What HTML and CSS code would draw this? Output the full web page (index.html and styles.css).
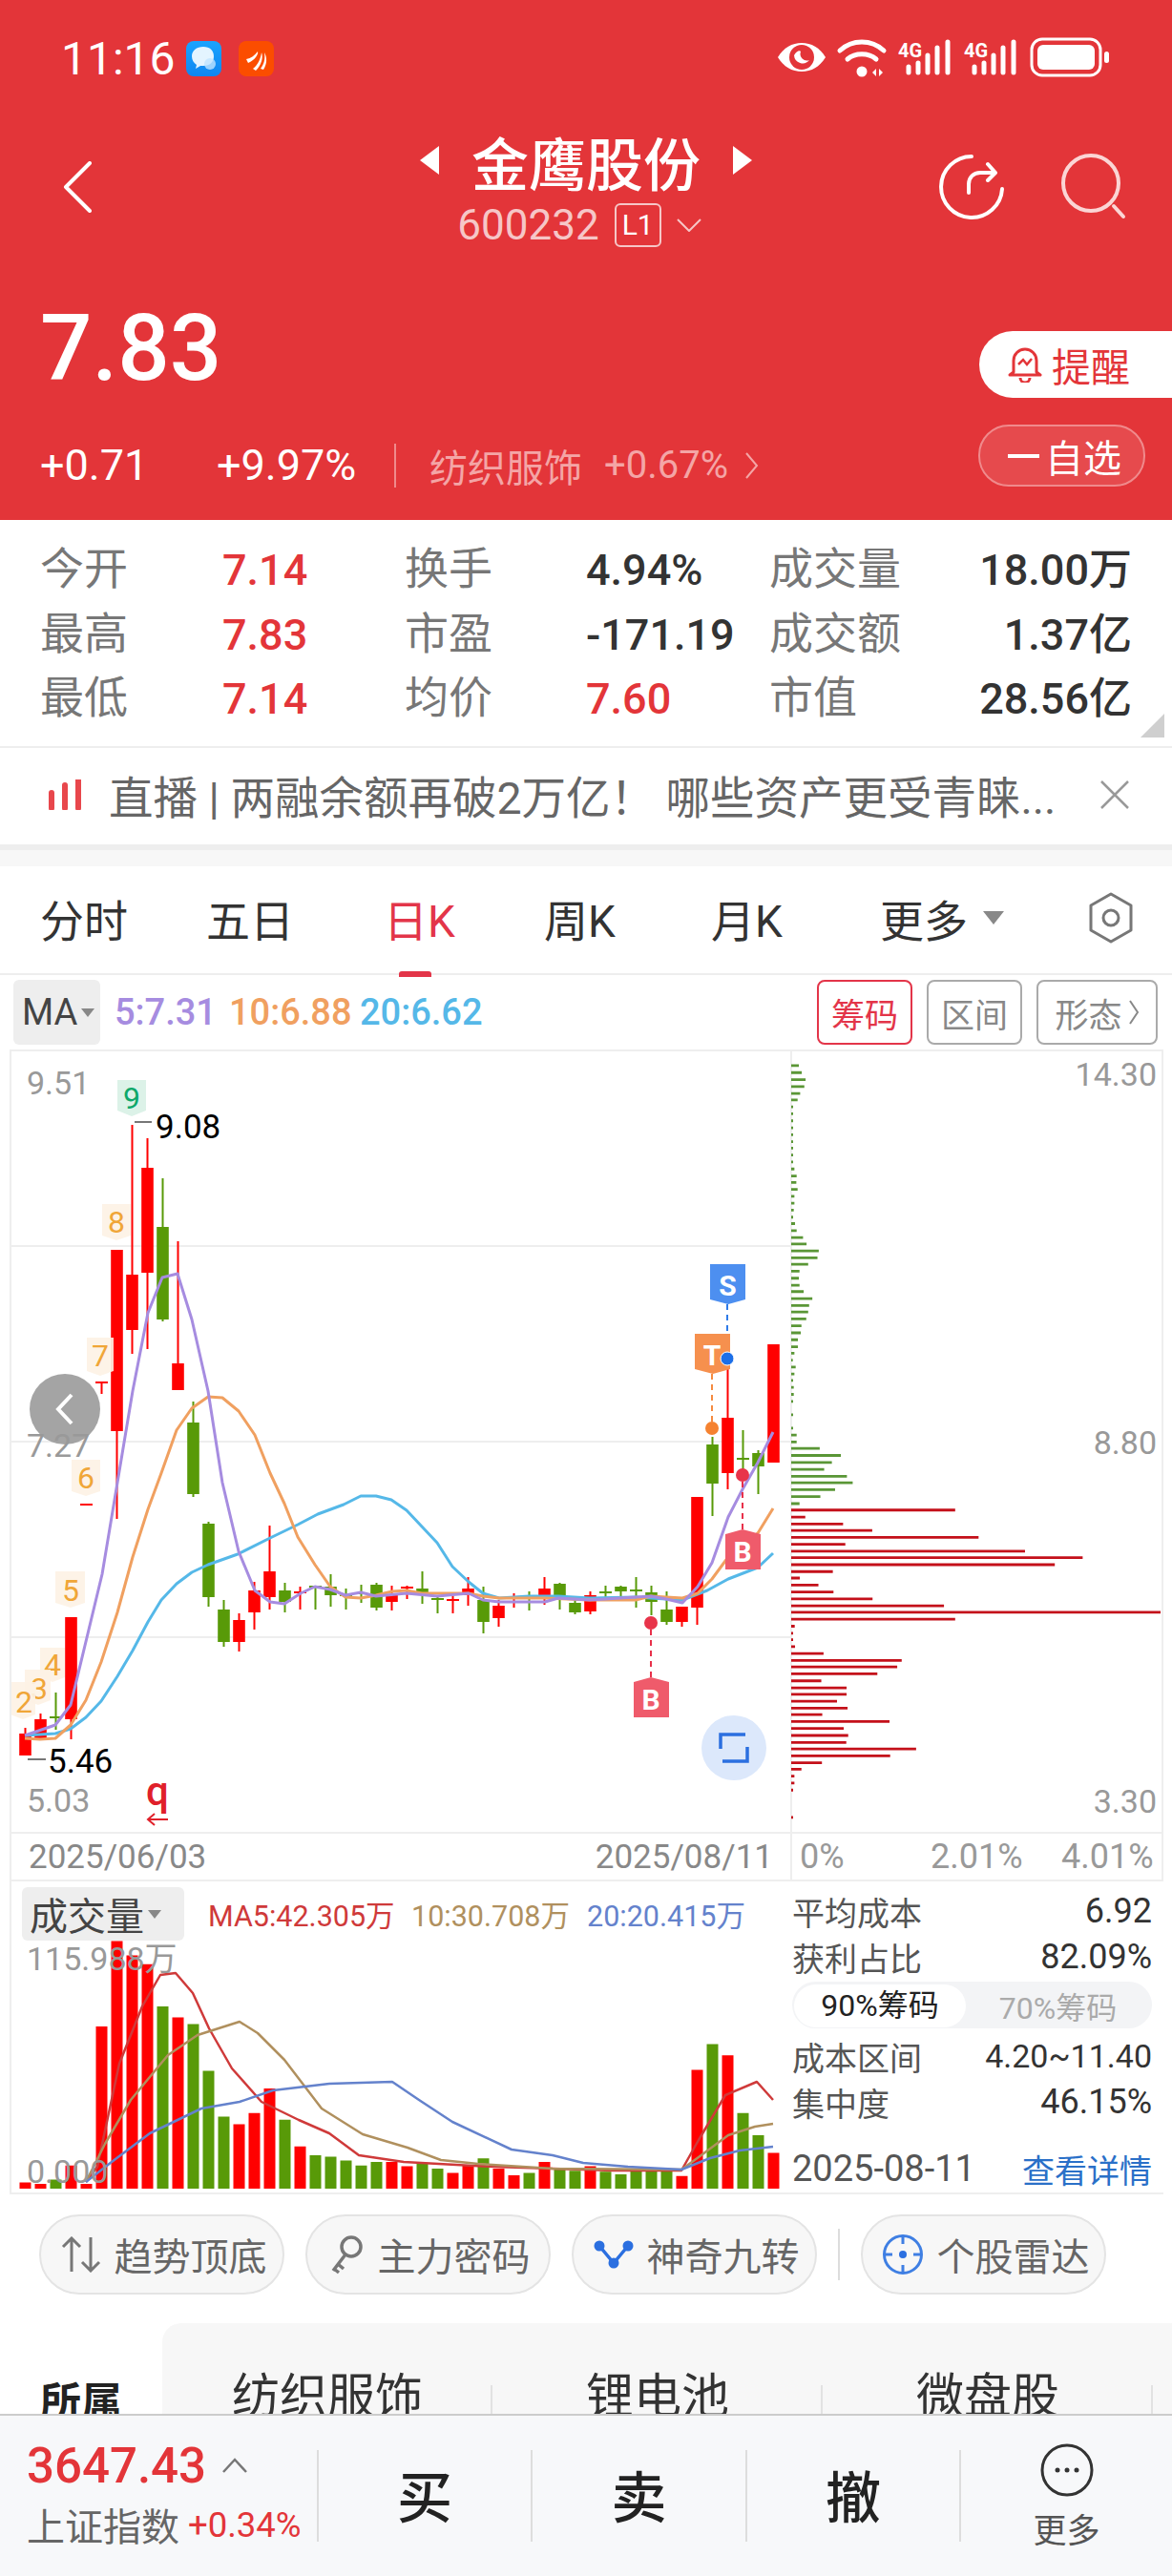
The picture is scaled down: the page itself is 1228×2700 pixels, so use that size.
FILE: index.html
```html
<!DOCTYPE html>
<html lang="zh-CN">
<head>
<meta name="viewport" content="width=device-width, initial-scale=1">
<title>金鹰股份</title>
<link rel="stylesheet" href="styles.css">
</head>
<body>

<header class="hero">
    <div class="status">
        <span class="clock">11:16</span>
        <svg class="app-icon" viewBox="0 0 37 37"><defs><linearGradient id="qq" x1="0" y1="0" x2="0" y2="1"><stop offset="0" stop-color="#1aa4ff"/><stop offset="1" stop-color="#0f86f0"/></linearGradient></defs><rect width="37" height="37" rx="8" fill="url(#qq)"/><path d="M18 6c-7 0-12 4-12 10 0 4 2 7 5 9l-1 4 5-3h3c7 0 11-4 11-10S25 6 18 6z" fill="#e4f4ff"/><circle cx="25" cy="24" r="6" fill="#bfe4ff" opacity=".8"/></svg>
        <svg class="app-icon app-icon-second" viewBox="0 0 37 37"><rect width="37" height="37" rx="8" fill="#fb4d00"/><path d="M8 19c5-1 9-4 12-8 1 3-3 9-10 12zM15 29c5-4 8-10 9-17 2 5 0 13-6 19zM23 29c4-5 5-11 4-17 3 5 3 12-1 18z" fill="#fff"/></svg>
        <span class="status-gap"></span>
        <svg class="status-icons" width="348" height="44" viewBox="815 39 348 44">
            <path d="M815 60c6-10 15-15 25-15s19 5 25 15c-6 10-15 15-25 15s-19-5-25-15z" fill="#fff"/>
            <circle cx="840" cy="60" r="13" fill="#e33539"/>
            <path d="M832 58a9 9 0 0 0 16 5 7 7 0 0 1-9-9c-1-2-5 0-7 4z" fill="#fff"/>
            <g fill="none" stroke="#fff" stroke-width="5" stroke-linecap="round">
                <path d="M880 53c13-12 33-12 46 0"/>
                <path d="M888 62c8-7 22-7 30 0"/>
            </g>
            <circle cx="903" cy="75" r="5.5" fill="#fff"/>
            <path d="M918 72v8l-4-4zM921 72v8l4-4z" fill="#fff"/>
            <text class="net" x="941" y="60">4G</text>
            <text class="net" x="1010" y="60">4G</text>
            <g fill="none" stroke="#fff" stroke-width="5" stroke-linecap="round">
                <path d="M952 70v6M962 66v10M972 58v18M982 50v26M993 44v32"/>
                <path d="M1021 70v6M1031 66v10M1041 58v18M1051 50v26M1062 44v32"/>
            </g>
            <rect x="1081" y="41" width="72" height="38" rx="11" fill="none" stroke="#fff" stroke-width="3"/>
            <rect x="1087" y="47" width="60" height="26" rx="6" fill="#fff"/>
            <rect x="1157" y="54" width="5" height="12" rx="2.5" fill="#fff"/>
        </svg>
    </div>

    <div class="titlebar">
        <svg class="back" width="30" height="54" viewBox="0 0 30 54"><path d="M28 2 3 27l25 25" fill="none" stroke="#fff" stroke-width="4" stroke-linecap="round" stroke-linejoin="round"/></svg>
        <div class="title-block">
            <div class="title-line">
                <span class="tri tri-left"></span>
                <span class="stock-name">金鹰股份</span>
                <span class="tri tri-right"></span>
            </div>
            <div class="code-line">
                <span>600232</span>
                <span class="level">L1</span>
                <svg width="26" height="14" viewBox="0 0 26 14"><path d="M1 1l12 12L25 1" fill="none" stroke="#f6c6c7" stroke-width="2"/></svg>
            </div>
        </div>
        <svg class="title-actions" width="196" height="70" viewBox="984 161 196 70">
            <g fill="none" stroke-linecap="round" stroke-linejoin="round" stroke-width="4">
                <path d="M1018 164a32 32 0 1 0 32 34" stroke="#fff"/>
                <path d="M1015 202v-9c0-7 5-12 12-12h15M1035 172l8 9-8 8" stroke="#fff"/>
                <circle cx="1143" cy="192" r="29" stroke="#fbd5d5"/>
                <path d="M1167 216l10 11" stroke="#fbd5d5"/>
            </g>
        </svg>
    </div>

    <div class="quote-head">
        <div class="price-col">
            <div class="price">7.83</div>
            <div class="change-row">
                <span class="chg-abs">+0.71</span>
                <span class="chg-pct">+9.97%</span>
                <span class="chg-div"></span>
                <span class="sector">纺织服饰</span>
                <span class="sector-pct">+0.67%</span>
                <svg width="15" height="30" viewBox="0 0 15 30"><path d="M2 2l11 13L2 28" fill="none" stroke="#f4a5a6" stroke-width="2"/></svg>
            </div>
        </div>
        <div class="btn-col">
            <div class="remind">
                <svg width="36" height="38" viewBox="0 0 36 38"><path d="M6 27V15a12 12 0 0 1 24 0v12l4 3H2zM13 33a5 5 0 0 0 10 0" fill="none" stroke="#e33539" stroke-width="3" stroke-linejoin="round"/><path d="M11 19l5-5 4 5 5-6" fill="none" stroke="#e33539" stroke-width="2.5"/></svg>
                <span>提醒</span>
            </div>
            <div class="watch"><span class="watch-dash"></span><span>自选</span></div>
        </div>
    </div>
</header>

<section class="quote">
    <span class="q-label">今开</span><span class="q-val up">7.14</span>
    <span class="q-label">换手</span><span class="q-val">4.94%</span>
    <span class="q-label">成交量</span><span class="q-val right">18.00万</span>

    <span class="q-label">最高</span><span class="q-val up">7.83</span>
    <span class="q-label">市盈</span><span class="q-val">-171.19</span>
    <span class="q-label">成交额</span><span class="q-val right">1.37亿</span>

    <span class="q-label">最低</span><span class="q-val up">7.14</span>
    <span class="q-label">均价</span><span class="q-val up">7.60</span>
    <span class="q-label">市值</span><span class="q-val right">28.56亿</span>
    <span class="corner"></span>
</section>

<section class="news">
    <svg width="36" height="32" viewBox="0 0 36 32"><path d="M4 14v16M18 6v24M32 1v29" fill="none" stroke="#e8474c" stroke-width="6" stroke-linecap="round"/></svg>
    <span class="news-text">直播 | 两融余额再破2万亿！ 哪些资产更受青睐...</span>
    <svg width="32" height="32" viewBox="0 0 32 32"><path d="M2 2l28 28M30 2 2 30" fill="none" stroke="#999" stroke-width="2.5"/></svg>
</section>
<div class="band"></div>

<nav class="tabs">
    <span>分时</span>
    <span>五日</span>
    <span class="active">日K</span>
    <span>周K</span>
    <span>月K</span>
    <span class="tab-more">更多<i class="caret"></i></span>
    <svg width="48" height="54" viewBox="0 0 48 54"><path d="M24 2l21 12v26L24 52 3 40V14z" fill="none" stroke="#777" stroke-width="3" stroke-linejoin="round"/><circle cx="24" cy="27" r="8" fill="none" stroke="#777" stroke-width="3"/></svg>
</nav>

<div class="toolbar">
    <div class="ma-btn">MA<i class="caret small"></i></div>
    <span class="ma ma5">5:7.31</span>
    <span class="ma ma10">10:6.88</span>
    <span class="ma ma20">20:6.62</span>
    <span class="tool-gap"></span>
    <span class="tool on">筹码</span>
    <span class="tool">区间</span>
    <span class="tool wide">形态
        <svg width="12" height="28" viewBox="0 0 12 28"><path d="M2 2l8 12-8 12" fill="none" stroke="#888" stroke-width="2"/></svg>
    </span>
</div>

<section class="chart-box">
    <div class="chart-top">
        <div class="kline-wrap">
            <svg class="kline" width="816" height="818" viewBox="12 1102 816 818">
                <path class="grid" d="M12 1306H828M12 1511H828M12 1716H828"/>

                <text class="axis" x="28" y="1147">9.51</text>

                <path class="wick red" d="M26.5 1811V1840M42.5 1796V1823M74.5 1695V1823M106.5 1449V1461M122.5 1310V1592M138.5 1179V1419M154.5 1193V1414M186.5 1301V1457M250.5 1691V1731M266.5 1658V1708M282.5 1599V1687M314.5 1663V1687M410.5 1662V1688M426.5 1662V1676M474.5 1673V1691M490.5 1653V1683M522.5 1677V1705M538.5 1670V1685M570.5 1653V1682M618.5 1668V1692M714.5 1684V1705M730.5 1569V1703M762.5 1435V1561"/>
                <path class="wick red" d="M84 1577H97M100 1449H113M308 1669H321M420 1664H433M468 1677H481M532 1675H545"/>
                <path class="body red" d="M26.5 1817V1840M42.5 1802V1823M74.5 1695V1802M122.5 1310V1500M138.5 1336V1394M154.5 1224V1334M186.5 1429V1457M250.5 1698V1721M266.5 1667V1690M282.5 1647V1674M410.5 1671V1679M490.5 1665V1672M522.5 1683V1696M570.5 1665V1673M618.5 1672V1689M714.5 1684V1700M730.5 1569V1685M762.5 1486V1544M810.5 1409V1533"/>

                <path class="wick green" d="M58.5 1774V1813M170.5 1235V1385M202.5 1469V1569M218.5 1595V1684M234.5 1677V1726M298.5 1659V1690M330.5 1662V1687M346.5 1650V1684M362.5 1665V1687M378.5 1661V1680M394.5 1659V1688M442.5 1647V1681M458.5 1672V1691M506.5 1663V1712M554.5 1668V1688M586.5 1659V1687M602.5 1673V1692M634.5 1662V1677M650.5 1662V1675M666.5 1653V1685M682.5 1662V1693M698.5 1668V1703M746.5 1506V1589M778.5 1499V1552M794.5 1520V1566"/>
                <path class="wick green" d="M52 1800H65M324 1663H337M356 1672H369M372 1670H385M452 1676H465M548 1675H561M628 1669H641M660 1667H673M772 1529H785"/>
                <path class="body green" d="M170.5 1286V1383M202.5 1491V1566M218.5 1597V1674M234.5 1687V1721M298.5 1667V1679M346.5 1663V1672M394.5 1661V1685M442.5 1665V1672M506.5 1677V1700M586.5 1660V1673M602.5 1680V1690M650.5 1663V1668M682.5 1669V1679M698.5 1687V1700M746.5 1514V1555M794.5 1523V1537"/>

                <polyline class="line l-blue" points="26,1819 58,1817 74,1812 90,1800 106,1783 123,1757 139,1730 155,1700 169,1677 185,1660 201,1648 218,1640 249,1629 283,1612 312,1598 333,1587 360,1577 378,1568 394,1568 410,1572 426,1583 458,1617 474,1642 491,1658 506,1670 523,1675 554,1673 585,1673 618,1675 666,1674 698,1676 715,1677 741,1667 763,1655 794,1643 810,1628"/>
                <polyline class="line l-orange" points="26,1822 42,1823 58,1822 74,1808 90,1782 106,1742 123,1690 139,1632 155,1582 169,1544 185,1499 201,1476 218,1464 233,1465 250,1479 267,1504 283,1544 298,1576 312,1611 330,1640 346,1663 362,1674 378,1675 394,1672 411,1668 426,1667 442,1670 491,1670 506,1673 523,1675 571,1675 618,1677 666,1677 682,1673 715,1675 731,1670 746,1655 763,1632 794,1607 810,1581"/>
                <polyline class="line l-purple" points="26,1819 58,1808 74,1787 107,1650 123,1554 139,1458 155,1376 170,1339 186,1335 201,1383 218,1458 233,1554 250,1626 267,1667 283,1679 298,1681 315,1670 330,1663 346,1666 362,1672 378,1669 394,1673 426,1670 458,1673 491,1670 506,1677 523,1679 571,1679 585,1675 618,1677 666,1674 682,1673 698,1676 715,1680 731,1663 746,1638 763,1590 778,1561 794,1533 810,1501"/>

                <g class="tag-nine"><path d="M123 1132h30v32l-15 6-15-6z"/><text x="138" y="1162">9</text></g>
                <g class="tag-num">
                    <path d="M107 1262h30v33l-15 5-15-5z"/><text x="122" y="1292">8</text>
                    <path d="M91 1402h28v35l-14 5-14-5z"/><text x="105" y="1432">7</text>
                    <path d="M75 1530h30v33l-15 5-15-5z"/><text x="90" y="1560">6</text>
                    <path d="M58 1647h31v33l-15 5-16-5z"/><text x="74" y="1678">5</text>
                    <path d="M42 1727h26v31l-13 5-13-5z"/><text x="55" y="1756">4</text>
                    <path d="M26 1750h27v32l-13 5-14-5z"/><text x="41" y="1781">3</text>
                    <path d="M11 1763h26v34l-13 5-13-5z"/><text x="25" y="1795">2</text>
                </g>

                <path class="dash-gray" d="M141 1176h18M29 1844h19"/>
                <text class="hi-lo" x="163" y="1193">9.08</text>
                <text class="hi-lo" x="50" y="1858">5.46</text>
                <text class="axis" x="28" y="1899">5.03</text>

                <circle class="nav-dot" cx="68" cy="1477" r="37"/>
                <path class="nav-chev" d="M75 1462l-14 15 14 15"/>
                <text class="axis" x="28" y="1527">7.27</text>

                <path class="dash d-blue" d="M762 1367V1418"/>
                <path class="dash d-orange" d="M746 1440V1490"/>
                <path class="dash d-red" d="M778 1553V1603M682 1708V1758"/>
                <g class="sig">
                    <path class="s-b" d="M744 1325h37v37l-18 5-19-5z"/><text x="762.500" y="1358">S</text>
                    <path class="s-t" d="M728 1398h37v37l-18 5-19-5z"/><text x="746" y="1431">T</text>
                    <path class="s-r" d="M760 1608l18-5 19 5v37h-37z"/><text x="778" y="1637">B</text>
                    <path class="s-r" d="M664 1763l18-5 19 5v37h-37z"/><text x="682" y="1792">B</text>
                </g>
                <circle class="dot-b" cx="762" cy="1424" r="7"/>
                <circle class="dot-o" cx="746" cy="1497" r="7"/>
                <circle class="dot-r" cx="778" cy="1546" r="7"/>
                <circle class="dot-r" cx="682" cy="1701" r="7"/>

                <ellipse class="fit-bg" cx="769" cy="1832" rx="34" ry="34"/>
                <path class="fit-ic" d="M781 1818h-26v15M757 1846h26v-15"/>

                <text class="q-mark" x="165" y="1892">q</text>
                <path class="q-arrow" d="M176 1907h-21M162 1901l-7 6 7 6"/>
            </svg>
        </div>
        <div class="chip-wrap">
            <svg class="chip" width="387" height="818" viewBox="830 1102 387 818">
                <g transform="translate(830,1090) scale(.3356,.5612)">
                    <path class="chip-g" d="M0 48h24M0 61h33M0 74h45M0 87h41M0 100h28M0 112h20M0 125h6M0 138h6M0 151h6M0 164h6M0 177h6M0 190h6M0 202h6M0 215h6M0 228h6M0 241h10M0 254h17M0 266h16M0 279h20M0 292h10M0 305h10M0 318h8M0 331h6M0 343h12M0 356h17M0 369h37M0 381h48M0 394h86M0 407h82M0 419h53M0 432h26M0 445h24M0 458h26M0 470h39M0 483h66M0 496h56M0 508h53M0 521h47M0 534h32M0 547h30M0 560h21M0 573h21M0 585h10M0 598h5M0 611h14M0 624h10M0 636h6M0 649h8M0 662h8M0 675h6M0 700h6M0 725h6M0 738h17M0 751h17M0 763h89M0 776h155M0 789h127M0 802h103M0 815h174M0 827h192M0 840h137M0 853h91M0 866h26"/>
                    <path class="chip-r" d="M0 878h512M0 891h44M0 904h162M0 916h253M0 929h585M0 942h169M0 955h730M0 967h910M0 980h823M0 993h130M0 1005h27M0 1018h85M0 1031h132M0 1044h254M0 1057h477M0 1069h1160M0 1082h512M0 1095h11M0 1108h6M0 1120h6M0 1133h12M0 1146h101M0 1159h345M0 1171h331M0 1184h269M0 1197h94M0 1210h173M0 1222h173M0 1235h143M0 1248h176M0 1260h97M0 1273h307M0 1286h164M0 1299h178M0 1312h172M0 1324h390M0 1337h309M0 1350h96M0 1362h32M0 1375h10M0 1388h10M0 1401h6M0 1452h6"/>
                </g>
                <text class="axis end" x="1213" y="1138">14.30</text>
                <text class="axis end" x="1213" y="1524">8.80</text>
                <text class="axis end" x="1213" y="1900">3.30</text>
            </svg>
        </div>
    </div>
    <div class="axis-row">
        <div class="dates"><span>2025/06/03</span><span>2025/08/11</span></div>
        <div class="pcts"><span>0%</span><span>2.01%</span><span>4.01%</span></div>
    </div>
</section>

<section class="vol-box">
    <div class="vol-chart">
        <svg width="816" height="326" viewBox="12 1974 816 326">
            <path class="vol-r" d="M26.5 2296V2289.400M42.500 2296V2291M74.500 2296V2271.700M90.500 2296V2291M106.500 2296V2126M122.500 2296V2036.600M138.500 2296V2051.500M154.500 2296V2060.800M186.500 2296V2116.600M250.500 2296V2228.400M266.500 2296V2216.700M282.500 2296V2191M314.500 2296V2251.700M410.500 2296V2268M426.500 2296V2272.600M474.500 2296V2279.600M490.500 2296V2271.700M522.500 2296V2275M538.500 2296V2282M570.500 2296V2268M618.500 2296V2272.600M714.500 2296V2282.800M730.500 2296V2171.600M762.500 2296V2156.200M810.500 2296V2258.600"/>
            <path class="vol-g" d="M58.500 2296V2286.600M170.500 2296V2105M202.500 2296V2123.600M218.500 2296V2172.500M234.500 2296V2220.500M298.500 2296V2223.700M330.500 2296V2261M346.500 2296V2262.400M362.500 2296V2266.600M378.500 2296V2271.700M394.500 2296V2268M442.500 2296V2269.300M458.500 2296V2275M506.500 2296V2264.200M554.500 2296V2279.600M586.500 2296V2275M602.500 2296V2277.300M634.500 2296V2278.200M650.500 2296V2281M666.500 2296V2275.900M682.500 2296V2275.900M698.500 2296V2275.900M746.500 2296V2144.600M778.500 2296V2216.700M794.500 2296V2240"/>
            <polyline class="vline v-red" points="90,2289 102,2273 125,2165 149,2105 168,2072 184,2070 202,2091 219,2128 243,2170 274,2205 313,2224 345,2238 376,2261 423,2268 517,2273 642,2277 714,2277 732,2245 760,2198 793,2184 810,2203"/>
            <polyline class="vline v-brown" points="90,2289 110,2249 137,2203 176,2156 207,2135 251,2121 270,2133 298,2161 337,2212 380,2239 427,2253 462,2266 501,2270 579,2275 714,2276 732,2263 763,2240 791,2231 810,2228"/>
            <polyline class="vline v-blue" points="90,2289 117,2268 157,2238 211,2212 251,2205 286,2193 345,2186 411,2184 439,2203 474,2226 536,2255 579,2261 611,2269 658,2273 714,2276 744,2264 775,2256 810,2252"/>
            <text class="axis" x="28" y="2067">115.988万</text>
            <text class="axis" x="28" y="2290">0.000</text>
        </svg>
        <div class="vol-legend">
            <div class="vol-btn">成交量<i class="caret small"></i></div>
            <span class="v-ma5">MA5:42.305万</span>
            <span class="v-ma10">10:30.708万</span>
            <span class="v-ma20">20:20.415万</span>
        </div>
    </div>
    <div class="vol-side">
        <div class="side-row"><span class="side-k">平均成本</span><span>6.92</span></div>
        <div class="side-row"><span class="side-k">获利占比</span><span>82.09%</span></div>
        <div class="seg"><span class="seg-on">90%筹码</span><span>70%筹码</span></div>
        <div class="side-row"><span class="side-k">成本区间</span><span class="side-range">4.20~11.40</span></div>
        <div class="side-row"><span class="side-k">集中度</span><span>46.15%</span></div>
        <div class="side-row side-date"><span class="date-val">2025-08-11</span><span class="detail">查看详情</span></div>
    </div>
</section>

<section class="pills">
    <div class="pill">
        <svg width="42" height="38" viewBox="0 0 42 38"><path d="M11 37V2M2 11l9-9 9 9M31 1v35M22 27l9 9 9-9" fill="none" stroke="#777" stroke-width="3"/></svg>
        <span>趋势顶底</span>
    </div>
    <div class="pill">
        <svg width="36" height="42" viewBox="0 0 36 42"><circle cx="22" cy="13" r="10" fill="none" stroke="#777" stroke-width="3.500"/><path d="M16 21 3 38M8 31l6 5M4 36l5 4" fill="none" stroke="#777" stroke-width="3.500"/></svg>
        <span>主力密码</span>
    </div>
    <div class="pill">
        <svg width="42" height="30" viewBox="0 0 42 30"><path d="M6 6l15 18L36 6" fill="none" stroke="#2b6fe0" stroke-width="3.500"/><circle cx="6" cy="6" r="5.500" fill="#2b6fe0"/><circle cx="36" cy="6" r="5.500" fill="#2b6fe0"/><circle cx="21" cy="24" r="5.500" fill="#2b6fe0"/></svg>
        <span>神奇九转</span>
    </div>
    <span class="pill-div"></span>
    <div class="pill">
        <svg width="44" height="44" viewBox="0 0 44 44"><circle cx="22" cy="22" r="19.500" fill="none" stroke="#3f7fe3" stroke-width="3"/><circle cx="22" cy="22" r="4" fill="#2b6fe0"/><path d="M22 2v9M22 33v9M2 22h9M33 22h9" stroke="#3f7fe3" stroke-width="3"/></svg>
        <span>个股雷达</span>
    </div>
</section>

<section class="concept">
    <div class="concept-head">所属</div>
    <div class="concept-list">
        <span>纺织服饰</span>
        <span>锂电池</span>
        <span>微盘股</span>
    </div>
</section>

<footer class="foot">
    <div class="index">
        <div class="index-top">
            <span class="index-val">3647.43</span>
            <svg width="28" height="16" viewBox="0 0 28 16"><path d="M2 15 14 2l12 13" fill="none" stroke="#777" stroke-width="2.500"/></svg>
        </div>
        <div class="index-bot"><span>上证指数</span><span class="index-pct">+0.34%</span></div>
    </div>
    <div class="act">买</div>
    <div class="act">卖</div>
    <div class="act">撤</div>
    <div class="act-more">
        <svg width="56" height="56" viewBox="0 0 56 56"><circle cx="28" cy="28" r="26" fill="none" stroke="#333" stroke-width="3"/><circle cx="18" cy="28" r="2.500" fill="#333"/><circle cx="28" cy="28" r="2.500" fill="#333"/><circle cx="38" cy="28" r="2.500" fill="#333"/></svg>
        <span>更多</span>
    </div>
</footer>

</body>
</html>
```

FILE: styles.css
```css
* {
    box-sizing: border-box;
}
html, body {
    margin: 0;
    padding: 0;
}
body {
    width: 1228px;
    height: 2700px;
    overflow: hidden;
    background: #fff;
    color: #333;
    font-family: Roboto, "Noto Sans CJK SC", sans-serif;
}
svg {
    display: block;
    flex: none;
}

/* red header */
.hero {
    height: 545px;
    background: #e33539;
    color: #fff;
}
.status {
    height: 122px;
    display: flex;
    align-items: center;
    padding-left: 64px;
}
.clock {
    font-size: 48px;
    width: 131px;
}
.app-icon {
    width: 37px;
    height: 37px;
}
.app-icon-second {
    margin-left: 18px;
}
.status-gap {
    flex: 1;
}
.status-icons {
    margin-right: 65px;
}
.net {
    fill: #fff;
    font-size: 20px;
    font-weight: 700;
}
.titlebar {
    height: 150px;
    display: grid;
    grid-template-columns: 1fr auto 1fr;
    align-items: start;
    position: relative;
}
.back {
    margin: 47px 0 0 66px;
}
.title-block {
    display: flex;
    flex-direction: column;
    align-items: center;
}
.title-line {
    height: 92px;
    display: flex;
    align-items: center;
    gap: 34px;
}
.stock-name {
    font-size: 60px;
    font-weight: 500;
    width: 240px;
    white-space: nowrap;
}
.tri {
    width: 0;
    height: 0;
    border-top: 15px solid transparent;
    border-bottom: 15px solid transparent;
}
.tri-left {
    border-right: 20px solid #fff;
}
.tri-right {
    border-left: 20px solid #fff;
}
.code-line {
    height: 44px;
    display: flex;
    align-items: center;
    gap: 16px;
    color: #f6c6c7;
    font-size: 44px;
    margin-left: -14px;
}
.level {
    width: 49px;
    height: 46px;
    border: 2px solid #f6c6c7;
    border-radius: 6px;
    font-size: 30px;
    line-height: 42px;
    text-align: center;
    color: #fff;
}
.title-actions {
    justify-self: end;
    margin: 39px 48px 0 0;
}
.quote-head {
    height: 273px;
    display: flex;
    justify-content: space-between;
}
.price-col {
    padding: 48px 0 0 42px;
}
.price {
    height: 88px;
    line-height: 90px;
    font-size: 96px;
    font-weight: 500;
}
.change-row {
    margin-top: 57px;
    height: 45px;
    display: flex;
    align-items: center;
    font-size: 45px;
}
.chg-abs {
    width: 185px;
}
.chg-pct {
    width: 186px;
}
.chg-div {
    width: 2px;
    height: 46px;
    background: #f08a8c;
    margin-right: 35px;
}
.sector {
    width: 183px;
    color: #f4a5a6;
    font-size: 40px;
}
.sector-pct {
    width: 147px;
    color: #f4a5a6;
    font-size: 40px;
}
.btn-col {
    padding-top: 75px;
    display: flex;
    flex-direction: column;
    align-items: flex-end;
    gap: 28px;
}
.remind {
    width: 202px;
    height: 70px;
    background: #fff;
    color: #e33539;
    border-radius: 35px 0 0 35px;
    display: flex;
    align-items: center;
    gap: 10px;
    padding-left: 30px;
    font-size: 41px;
}
.watch {
    width: 175px;
    height: 65px;
    margin-right: 28px;
    border: 2px solid #f08a8c;
    border-radius: 32px;
    background: #e64a4d;
    display: flex;
    align-items: center;
    padding-left: 29px;
    gap: 6px;
    font-size: 40px;
}
.watch-dash {
    width: 33px;
    height: 4px;
    background: #fff;
}

/* quote table */
.quote {
    position: relative;
    height: 239px;
    padding: 17px 42px 0;
    border-bottom: 2px solid #eee;
    display: grid;
    grid-template-columns: 191px 191px 190px 192px 144px 1fr;
    grid-auto-rows: 67.5px;
    align-items: center;
    font-size: 45px;
}
.q-label {
    color: #777;
    font-size: 46px;
    line-height: 60px;
    padding-top: 1px;
}
.q-val {
    color: #333;
    white-space: nowrap;
    font-weight: 500;
    line-height: 60px;
    padding-top: 5px;
}
.q-val.up {
    color: #e33539;
}
.q-val.right {
    text-align: right;
}
.corner {
    position: absolute;
    right: 8px;
    bottom: 9px;
    width: 0;
    height: 0;
    border-left: 25px solid transparent;
    border-bottom: 25px solid #cfcfcf;
}

.news {
    height: 101px;
    display: flex;
    align-items: center;
    padding: 0 0 4px 50px;
}
.news-text {
    width: 1038px;
    margin-left: 28px;
    font-size: 46.500px;
    color: #666;
    white-space: nowrap;
}
.band {
    height: 23px;
    background: #f7f7f7;
    border-top: 6px solid #eee;
}

/* period tabs */
.tabs {
    position: relative;
    height: 114px;
    padding-left: 42px;
    padding-bottom: 4px;
    border-bottom: 2px solid #eee;
    display: grid;
    grid-template-columns: 174px 186px 168px 175px 177px 218px 48px;
    align-items: center;
    font-size: 46px;
    color: #333;
}
.tabs .active {
    color: #e33549;
    position: relative;
}
.tabs .active::after {
    content: "";
    position: absolute;
    left: 16px;
    bottom: -29px;
    width: 34px;
    height: 6px;
    background: #e33549;
    border-radius: 3px 3px 0 0;
}
.tab-more {
    display: flex;
    align-items: center;
}
.caret {
    display: inline-block;
    width: 0;
    height: 0;
    margin-left: 16px;
    border-left: 11px solid transparent;
    border-right: 11px solid transparent;
    border-top: 14px solid #888;
}
.caret.small {
    margin-left: 4px;
    border-left-width: 7px;
    border-right-width: 7px;
    border-top-width: 9px;
}

.toolbar {
    height: 78px;
    display: flex;
    align-items: center;
    padding: 0 15px 0 14px;
}
.ma-btn {
    width: 91px;
    height: 68px;
    border-radius: 6px;
    background: #eee;
    display: flex;
    align-items: center;
    padding-left: 9px;
    font-size: 38px;
    color: #444;
}
.ma {
    font-size: 38px;
    font-weight: 500;
    white-space: nowrap;
}
.ma5 {
    width: 120px;
    margin-left: 15px;
    color: #a68ce0;
}
.ma10 {
    width: 137px;
    color: #f0a060;
}
.ma20 {
    color: #55b8e8;
}
.tool-gap {
    flex: 1;
}
.tool {
    width: 100px;
    height: 68px;
    margin-left: 15px;
    border: 2px solid #aaa;
    border-radius: 8px;
    color: #888;
    font-size: 35px;
    display: flex;
    align-items: center;
    justify-content: center;
    gap: 6px;
}
.tool.on {
    border-color: #e33549;
    color: #e33549;
}
.tool.wide {
    width: 127px;
}

/* kline */
.chart-box {
    margin: 0 9px 0 10px;
    border: 2px solid #eee;
}
.chart-top {
    height: 820px;
    display: flex;
    border-bottom: 2px solid #eee;
}
.kline-wrap {
    width: 816px;
}
.chip-wrap {
    border-left: 2px solid #eee;
}
.chip {
    margin-left: -1px;
}
.grid {
    stroke: #eee;
    stroke-width: 2;
    fill: none;
}
.axis {
    fill: #999;
    font-size: 34px;
}
.axis.end {
    text-anchor: end;
}
.wick {
    stroke-width: 2;
    fill: none;
}
.body {
    stroke-width: 12.6;
    fill: none;
}
.red {
    stroke: #f00;
}
.green {
    stroke: #589a08;
}
.line {
    fill: none;
    stroke-width: 3;
    stroke-linejoin: round;
}
.l-purple {
    stroke: #a68ce0;
}
.l-orange {
    stroke: #f0a060;
}
.l-blue {
    stroke: #55b8e8;
}
.tag-num path {
    fill: #fdf2e4;
    opacity: .9;
}
.tag-num text {
    fill: #f0a638;
    font-size: 32px;
    text-anchor: middle;
}
.tag-nine path {
    fill: #dcf2e8;
}
.tag-nine text {
    fill: #0da86a;
    font-size: 32px;
    text-anchor: middle;
}
.dash-gray {
    stroke: #777;
    stroke-width: 2;
}
.hi-lo {
    fill: #000;
    font-size: 35px;
}
.nav-dot {
    fill: #9a9a9a;
    opacity: .9;
}
.nav-chev {
    fill: none;
    stroke: #fff;
    stroke-width: 4;
}
.dash {
    fill: none;
    stroke-width: 2;
    stroke-dasharray: 6 5;
}
.d-blue {
    stroke: #2f7be8;
}
.d-orange {
    stroke: #f58a40;
}
.d-red {
    stroke: #e8304a;
}
.sig text {
    fill: #fff;
    font-size: 30px;
    font-weight: 700;
    text-anchor: middle;
}
.s-b {
    fill: #4d8ff0;
}
.s-t {
    fill: #f6904e;
}
.s-r {
    fill: #ef5b6b;
}
.dot-b {
    fill: #1c6fe8;
    stroke: #fff;
}
.dot-o {
    fill: #f58230;
}
.dot-r {
    fill: #e8344a;
}
.fit-bg {
    fill: #dce8fb;
}
.fit-ic {
    fill: none;
    stroke: #2b6fe0;
    stroke-width: 3.500;
}
.q-mark {
    fill: #e0202a;
    font-size: 42px;
    font-weight: 500;
    text-anchor: middle;
}
.q-arrow {
    fill: none;
    stroke: #e0202a;
    stroke-width: 2;
}
.chip-g {
    fill: none;
    stroke: #5a9636;
    stroke-width: 5;
}
.chip-r {
    fill: none;
    stroke: #c4101a;
    stroke-width: 5;
}
.axis-row {
    height: 48px;
    display: flex;
    align-items: center;
    font-size: 36px;
    color: #999;
}
.dates {
    width: 816px;
    display: flex;
    justify-content: space-between;
    padding: 0 18px;
    color: #888;
    font-size: 35px;
}
.pcts {
    flex: 1;
    height: 48px;
    display: grid;
    grid-template-columns: 137px 137px 1fr;
    align-items: center;
    padding-left: 8px;
    border-left: 2px solid #eee;
    white-space: nowrap;
}

/* volume */
.vol-box {
    margin: 0 9px 0 10px;
    height: 328px;
    display: flex;
    border-left: 2px solid #eee;
    border-bottom: 2px solid #eee;
}
.vol-chart {
    position: relative;
    width: 816px;
}
.vol-r, .vol-g {
    fill: none;
    stroke-width: 12;
}
.vol-r {
    stroke: #f00;
}
.vol-g {
    stroke: #589a08;
}
.vline {
    fill: none;
    stroke-width: 2.500;
    stroke-linejoin: round;
}
.v-red {
    stroke: #cf3a3a;
}
.v-brown {
    stroke: #b0905e;
}
.v-blue {
    stroke: #6482cc;
}
.vol-legend {
    position: absolute;
    left: 11px;
    top: 6px;
    height: 56px;
    display: flex;
    align-items: center;
    font-size: 30.500px;
    white-space: nowrap;
}
.vol-btn {
    width: 170px;
    height: 56px;
    margin-right: 25px;
    border-radius: 6px;
    background: #eee;
    display: flex;
    align-items: center;
    padding-left: 8px;
    font-size: 40px;
    color: #444;
}
.v-ma5 {
    width: 213px;
    color: #cf3a3a;
}
.v-ma10 {
    width: 184px;
    color: #b0905e;
}
.v-ma20 {
    color: #6482cc;
}
.vol-side {
    flex: 1;
    padding: 7px 12px 0 2px;
    font-size: 36px;
    color: #333;
}
.side-row {
    height: 48px;
    display: flex;
    align-items: center;
    justify-content: space-between;
    white-space: nowrap;
}
.side-k {
    color: #555;
    font-size: 34px;
}
.side-range {
    font-size: 34px;
}
.seg {
    height: 49px;
    margin: 2px 0 5px;
    padding: 2px;
    border-radius: 25px;
    background: #f3f4f6;
    display: grid;
    grid-template-columns: 180px 1fr;
    align-items: center;
    text-align: center;
    color: #aaa;
    font-size: 32px;
}
.seg-on {
    height: 45px;
    line-height: 45px;
    background: #fff;
    border-radius: 23px;
    color: #222;
}
.side-date {
    margin-top: 22px;
}
.date-val {
    color: #555;
    font-size: 38px;
}
.detail {
    color: #2a70c8;
    font-size: 34px;
}

/* feature pills */
.pills {
    height: 135px;
    padding: 21px 0 0 41px;
    display: flex;
    align-items: flex-start;
    gap: 22px;
}
.pill {
    width: 257px;
    height: 84px;
    padding-left: 4px;
    border: 2px solid #e4e4e4;
    border-radius: 42px;
    background: #f7f7f7;
    display: flex;
    align-items: center;
    justify-content: center;
    gap: 14px;
    font-size: 40px;
    color: #666;
}
.pill-div {
    width: 2px;
    height: 54px;
    margin: 15px 0 0;
    background: #ddd;
}

.concept {
    height: 95px;
    display: flex;
    overflow: hidden;
}
.concept-head {
    width: 170px;
    padding: 55px 0 0 42px;
    font-size: 43px;
    font-weight: 700;
    line-height: 56px;
    color: #222;
}
.concept-list {
    flex: 1;
    padding-top: 48px;
    background: #f7f7f7;
    border-top-left-radius: 20px;
    display: grid;
    grid-template-columns: repeat(3, 346px);
    font-size: 50px;
    line-height: 58px;
    color: #333;
    text-align: center;
}
.concept-list span {
    position: relative;
}
.concept-list span::after {
    content: "";
    position: absolute;
    right: 0;
    top: 17px;
    width: 2px;
    height: 40px;
    background: #e2e2e2;
}

/* bottom bar */
.foot {
    height: 170px;
    border-top: 2px solid #ccc;
    background: #f7f8fa;
    display: grid;
    grid-template-columns: 334px 224px 225px 224px 1fr;
    align-items: center;
}
.index {
    height: 96px;
    padding-left: 28px;
    border-right: 2px solid #ddd;
}
.index-top {
    height: 48px;
    display: flex;
    align-items: center;
    gap: 16px;
    margin-top: -8px;
}
.index-val {
    color: #e33539;
    font-size: 51px;
    font-weight: 500;
}
.index-bot {
    margin-top: 9px;
    display: flex;
    align-items: center;
    gap: 9px;
    font-size: 40px;
    color: #666;
    white-space: nowrap;
}
.index-pct {
    color: #e33539;
    font-size: 36.500px;
}
.act {
    height: 96px;
    border-right: 2px solid #ddd;
    line-height: 102px;
    text-align: center;
    font-size: 58px;
    font-weight: 500;
    color: #222;
}
.act-more {
    display: flex;
    flex-direction: column;
    align-items: center;
    gap: 7px;
    margin-top: 3px;
    font-size: 35px;
    color: #555;
}
```
